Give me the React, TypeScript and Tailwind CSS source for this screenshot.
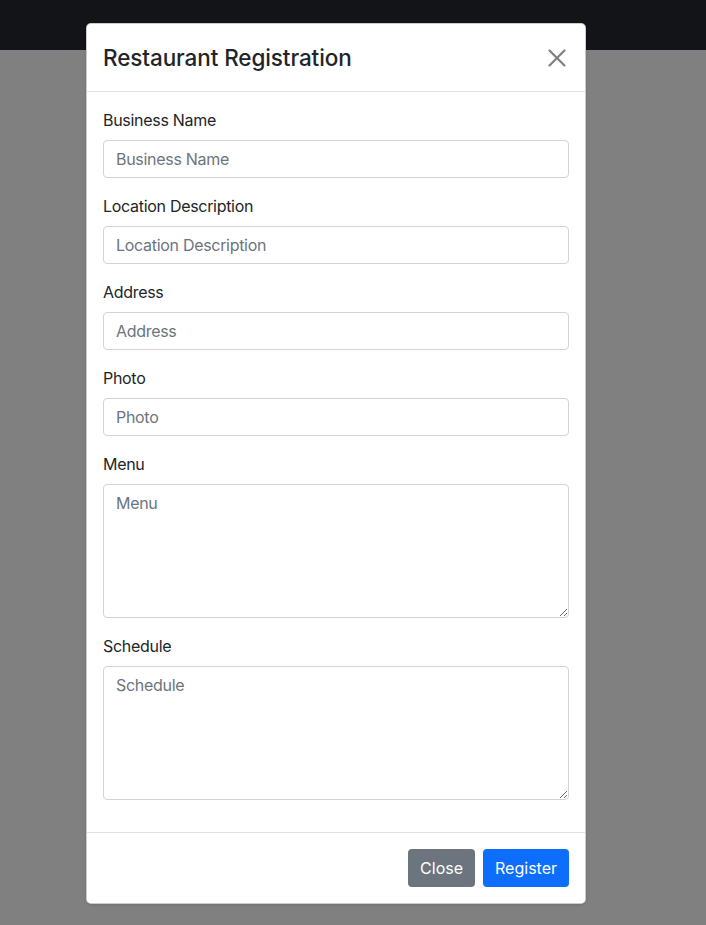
import { useState } from "react";

type Field = {
  id: string;
  label: string;
  multiline?: boolean;
};

const fields: Field[] = [
  { id: "businessName", label: "Business Name" },
  { id: "location", label: "Location Description" },
  { id: "address", label: "Address" },
  { id: "photo", label: "Photo" },
  { id: "menu", label: "Menu", multiline: true },
  { id: "schedule", label: "Schedule", multiline: true },
];

const inputClass =
  "block w-full rounded-[4px] border border-[#ced4da] bg-white px-3 py-[6px] text-base leading-6 tracking-[-0.3px] text-[#212529] placeholder:text-[#6c757d] outline-none focus:border-[#86b7fe]";

const App = () => {
  const [values, setValues] = useState<Record<string, string>>({});

  const update = (id: string, value: string) =>
    setValues((prev) => ({ ...prev, [id]: value }));

  return (
    <div
      className="min-h-[925px] bg-[#808080]"
      style={{ fontFamily: "Inter, 'Liberation Sans', sans-serif" }}
    >
      {/* dimmed navbar behind the backdrop */}
      <div className="h-[50px] bg-[#131417]" />

      {/* Modal */}
      <div className="-mt-[27px] ml-[86px] w-[500px] rounded-[5px] border border-black/20 bg-white text-[#212529] shadow-sm">
        <div className="flex items-center justify-between border-b border-[#dee2e6] p-4">
          <h4 className="text-[22.5px] leading-[35px] font-medium tracking-[-0.1px]">
            Restaurant Registration
          </h4>
          <button
            type="button"
            aria-label="Close"
            className="flex h-6 w-6 items-center justify-center opacity-50 hover:opacity-75"
          >
            <svg width="18" height="18" viewBox="0 0 16 16" fill="#000">
              <path d="M.293.293a1 1 0 0 1 1.414 0L8 6.586 14.293.293a1 1 0 1 1 1.414 1.414L9.414 8l6.293 6.293a1 1 0 0 1-1.414 1.414L8 9.414l-6.293 6.293a1 1 0 0 1-1.414-1.414L6.586 8 .293 1.707a1 1 0 0 1 0-1.414z" transform="scale(0.95) translate(0.4 0.4)" />
            </svg>
          </button>
        </div>

        <div className="p-4">
          {fields.map((field) => (
            <div key={field.id} className="mb-4">
              <label htmlFor={field.id} className="mb-2 block text-base leading-6 tracking-[-0.3px]">
                {field.label}
              </label>
              {field.multiline ? (
                <textarea
                  id={field.id}
                  rows={5}
                  placeholder={field.label}
                  value={values[field.id] ?? ""}
                  onChange={(e) => update(field.id, e.target.value)}
                  className={`${inputClass} h-[134px]`}
                />
              ) : (
                <input
                  id={field.id}
                  type="text"
                  placeholder={field.label}
                  value={values[field.id] ?? ""}
                  onChange={(e) => update(field.id, e.target.value)}
                  className={`${inputClass} h-[38px]`}
                />
              )}
            </div>
          ))}
        </div>

        <div className="flex justify-end gap-2 border-t border-[#dee2e6] px-4 py-4">
          <button
            type="button"
            className="h-[38px] rounded-[4px] bg-[#6c757d] px-3 text-base leading-6 text-white"
          >
            Close
          </button>
          <button
            type="button"
            className="h-[38px] rounded-[4px] bg-[#0d6efd] px-3 text-base leading-6 text-white"
          >
            Register
          </button>
        </div>
      </div>
    </div>
  );
};

export default App;
